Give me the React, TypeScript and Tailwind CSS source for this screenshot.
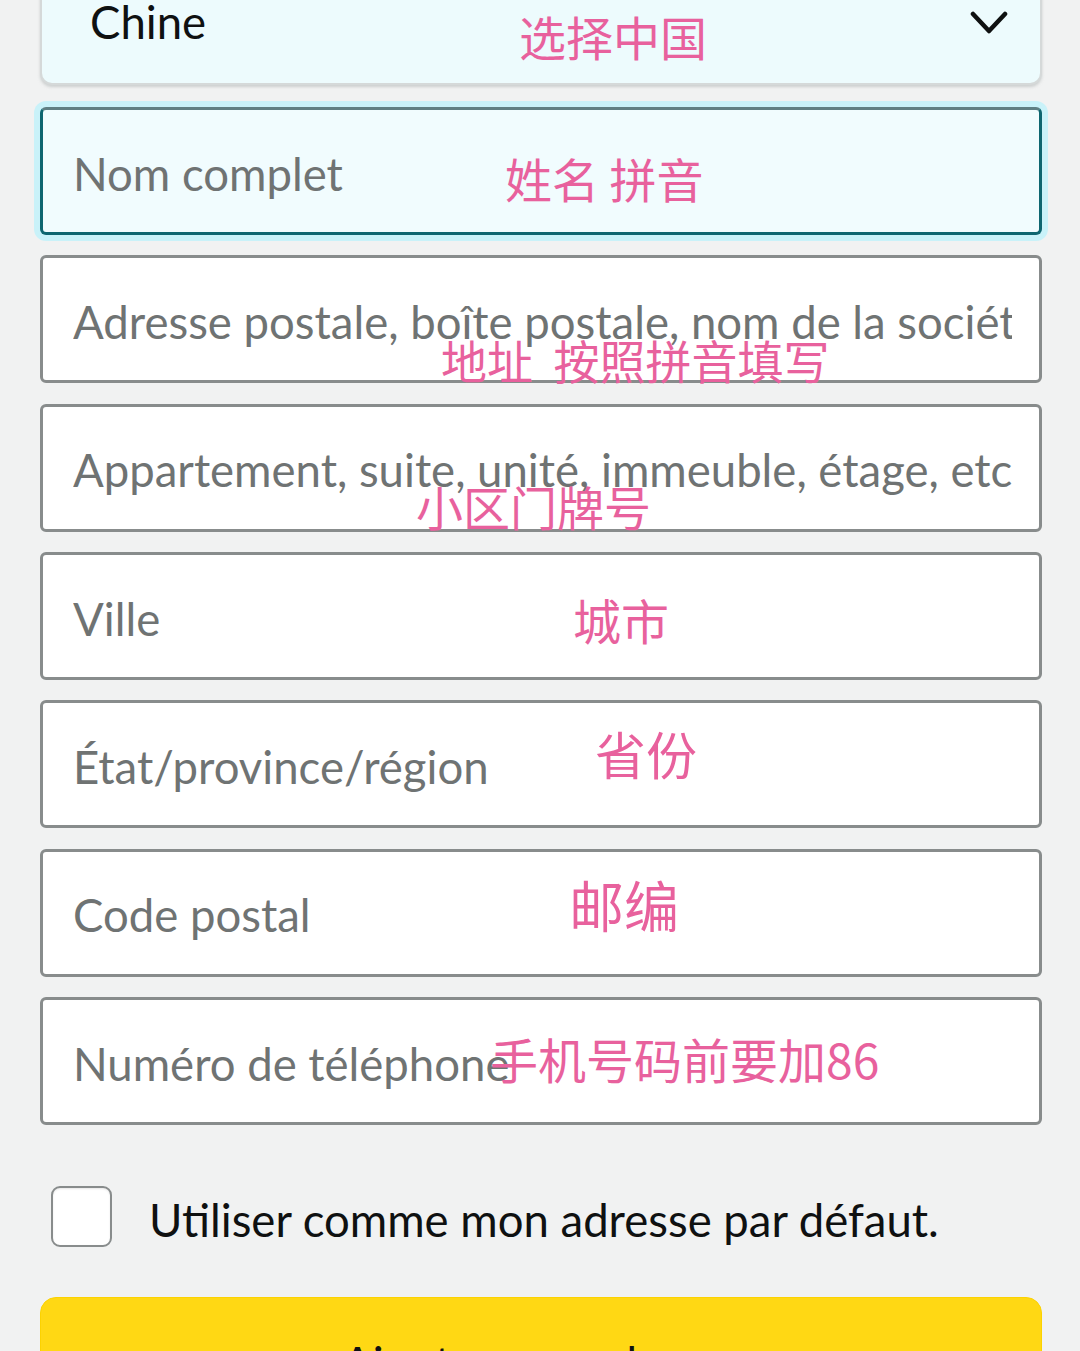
import React from "react";

const latin = "font-['Lato','Liberation_Sans',sans-serif]";
const cjk = "font-['Noto_Sans_CJK_SC','Noto_Sans',sans-serif]";

type Note = { text: string; left: number; top: number; size: number };

function Field({ label, note, focused }: { label: string; note: Note; focused?: boolean }) {
  return (
    <div
      className={
        focused
          ? "relative h-[128px] rounded-[6px] border-[3px] border-[#0e6670] border-t-[#5f7f83] bg-[#f1fcfe] shadow-[0_0_0_6px_#c9f2f9] flex items-center pl-[30px] pr-[27px]"
          : "relative h-[128px] rounded-[6px] border-[3px] border-[#888c8c] bg-white flex items-center pl-[30px] pr-[27px]"
      }
    >
      <div className={`${latin} overflow-hidden whitespace-nowrap text-[45.5px] leading-[1.2] text-[#6f7373] pt-[6px]`}>
        {label}
      </div>
      <span
        className={`${cjk} absolute whitespace-pre leading-none font-normal text-[#e8619d]`}
        style={{ left: note.left, top: note.top, fontSize: note.size }}
      >
        {note.text}
      </span>
    </div>
  );
}

export default function App() {
  return (
    <div className="min-h-[1351px] bg-[#f1f2f2] overflow-hidden">
      <div className="pl-[40px] pr-[38px]">
        {/* Country select */}
        <div className="relative mt-[-43px] h-[128px] rounded-[12px] border-2 border-[#d5d9d9] bg-[#edfbfd] shadow-[0_2px_3px_0_rgba(180,185,185,0.6)] flex items-center pl-[48px] pr-[30px]">
          <div className={`${latin} text-[45.5px] leading-[1.2] text-[#0f1111] pt-[2px]`}>Chine</div>
          <span
            className={`${cjk} absolute whitespace-pre leading-none font-normal text-[#e8619d]`}
            style={{ left: 477, top: 53, fontSize: 47 }}
          >
            选择中国
          </span>
          <svg
            className="absolute right-[32px] top-[52px]"
            width="38"
            height="24"
            viewBox="0 0 38 24"
            fill="none"
          >
            <path d="M3 3 L19 20 L35 3" stroke="#0f1111" strokeWidth="4.5" strokeLinecap="round" strokeLinejoin="round" />
          </svg>
        </div>

        <div className="mt-[22px] flex flex-col gap-[20.33px]">
          <Field focused label="Nom complet" note={{ text: "姓名 拼音", left: 462, top: 44, size: 47 }} />
          <Field
            label="Adresse postale, boîte postale, nom de la société, c/o"
            note={{ text: "地址  按照拼音填写", left: 398, top: 78, size: 46 }}
          />
          <Field
            label="Appartement, suite, unité, immeuble, étage, etc."
            note={{ text: "小区门牌号", left: 373, top: 75, size: 47 }}
          />
          <Field label="Ville" note={{ text: "城市", left: 530, top: 40, size: 48 }} />
          <Field label="État/province/région" note={{ text: "省份", left: 552, top: 25, size: 51 }} />
          <Field label="Code postal" note={{ text: "邮编", left: 526, top: 24, size: 55 }} />
          <Field label="Numéro de téléphone" note={{ text: "手机号码前要加86", left: 447, top: 34, size: 48 }} />
        </div>

        {/* Default address checkbox */}
        <div className="mt-[60px] ml-[11px] flex items-center gap-[37px]">
          <div className="h-[61px] w-[61px] shrink-0 rounded-[9px] border-2 border-[#888c8c] bg-white shadow-[inset_0_1px_2px_rgba(15,17,17,0.1)]" />
          <div className={`${latin} text-[45.5px] leading-[1.2] text-[#0f1111] pt-[8px]`}>
            Utiliser comme mon adresse par défaut.
          </div>
        </div>

        {/* Submit button */}
        <div className="mt-[49px] h-[128px] rounded-[16px] border border-[#fcd200] bg-[#ffd814] flex items-center justify-center">
          <span className={`${latin} text-[45.5px] leading-[1.2] text-[#0f1111] pt-[6px]`}>Ajouter une adresse</span>
        </div>
      </div>
    </div>
  );
}
